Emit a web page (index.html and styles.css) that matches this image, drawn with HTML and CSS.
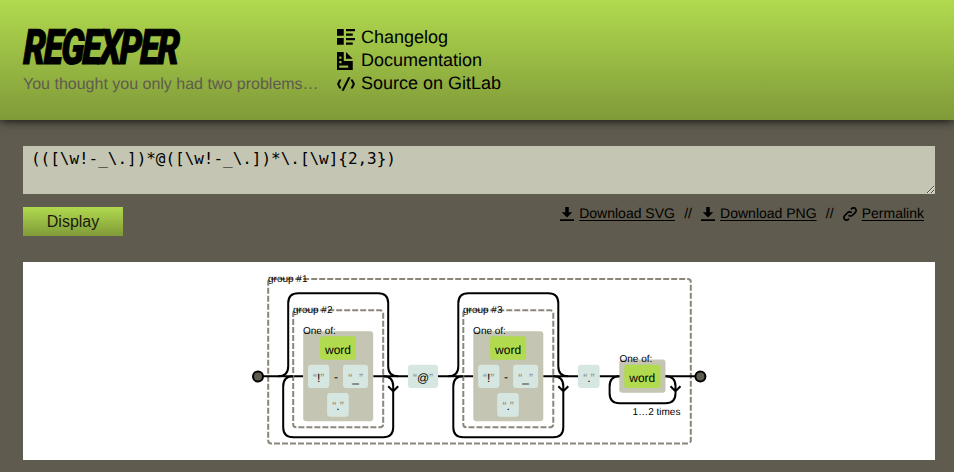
FILE: index.html
```html
<!DOCTYPE html>
<html lang="en">
<head>
<meta charset="utf-8">
<title>Regexper</title>
<link rel="stylesheet" href="styles.css">
</head>
<body>
<header class="header">
  <div class="brand">
    <h1 class="logo"><svg width="160" height="42" viewBox="0 0 160 42"><text class="logo-text" transform="translate(0 39) skewX(-2) scale(0.72 1)" x="0" y="0" textLength="217" lengthAdjust="spacing">REGEXPER</text></svg></h1>
    <div class="tagline">You thought you only had two problems…</div>
  </div>
  <nav class="nav">
    <a class="nav-link"><svg class="nav-icon" viewBox="0 0 8 8"><path d="M0 0v3h3v-3h-3zm4 0v1h4v-1h-4zm0 2v1h3v-1h-3zm-4 2v3h3v-3h-3zm4 0v1h4v-1h-4zm0 2v1h3v-1h-3z"/></svg>Changelog</a>
    <a class="nav-link"><svg class="nav-icon" viewBox="0 0 8 8"><path d="M0 0v8h7v-4h-4v-4h-3zm4 0v3h3l-3-3zm-3 2h1v1h-1v-1zm0 2h1v1h-1v-1zm0 2h4v1h-4v-1z"/></svg>Documentation</a>
    <a class="nav-link"><svg class="nav-icon" viewBox="0 0 8 8"><path d="M5 1l-3 6h1l3-6h-1zm-4 1l-1 2 1 2h1l-1-2 1-2h-1zm5 0l1 2-1 2h1l1-2-1-2h-1z"/></svg>Source on GitLab</a>
  </nav>
</header>
<main class="main">
  <textarea class="input" spellcheck="false">(([\w!-_\.])*@([\w!-_\.])*\.[\w]{2,3})</textarea>
  <div class="toolbar">
    <button class="display">Display</button>
    <div class="links">
      <svg class="link-icon" viewBox="0 0 8 8"><path d="M3 0v3h-2l3 3 3-3h-2v-3h-2zm-3 7v1h8v-1h-8z"/></svg><a class="link">Download SVG</a><span class="sep">//</span>
      <svg class="link-icon" viewBox="0 0 8 8"><path d="M3 0v3h-2l3 3 3-3h-2v-3h-2zm-3 7v1h8v-1h-8z"/></svg><a class="link">Download PNG</a><span class="sep">//</span>
      <svg class="link-icon" viewBox="0 0 8 8"><path d="M5.88.03c-.18.01-.36.03-.53.09-.27.1-.53.25-.75.47a.5.5 0 1 0 .69.69c.11-.11.24-.17.38-.22.35-.12.78-.07 1.06.22.39.39.39 1.04 0 1.44l-1.5 1.5c-.44.44-.8.48-1.06.47-.26-.01-.41-.13-.41-.13a.5.5 0 1 0-.5.88s.34.22.84.25c.5.03 1.2-.16 1.81-.78l1.5-1.5c.78-.78.78-2.04 0-2.81-.28-.28-.61-.45-.97-.53-.18-.04-.38-.04-.56-.03zm-2 2.31c-.5-.02-1.19.15-1.78.75l-1.5 1.5c-.78.78-.78 2.04 0 2.81.56.56 1.36.72 2.06.47.27-.1.53-.25.75-.47a.5.5 0 1 0-.69-.69c-.11.11-.24.17-.38.22-.35.12-.78.07-1.06-.22-.39-.39-.39-1.04 0-1.44l1.5-1.5c.4-.4.75-.45 1.03-.44.28.01.47.09.47.09a.5.5 0 1 0 .44-.88s-.34-.2-.84-.22z"/></svg><a class="link">Permalink</a>
    </div>
  </div>
  <div class="results">
    <svg class="diagram" width="912" height="198" viewBox="23 262 912 198">
      <defs>
        <g id="repeated-group">
          <rect class="group-box" x="293.2" y="310.3" width="90" height="117" rx="3"/>
          <rect class="charset" x="303.2" y="331.3" width="70" height="90" rx="3"/>
          <path class="track" d="M278.2 376.3q10 0 10-10V303.3q0-10 10-10H378.2q10 0 10 10V366.3q0 10 10 10M293.2 376.3q-10 0-10 10V427.3q0 10 10 10H383.2q10 0 10-10V386.3q0-10-10-10M388.2 386.3l5 5 5-5"/>
          <text class="small" x="303" y="334">One of:</text>
          <rect class="escape" x="320" y="336.3" width="36" height="23.4" rx="3"/>
          <text class="label" x="338" y="353.8">word</text>
          <rect class="literal" x="308" y="364.7" width="21.3" height="23.2" rx="3"/>
          <text class="label" x="318.6" y="381.8"><tspan class="quote">“</tspan>!<tspan class="quote">”</tspan></text>
          <text class="label" x="336" y="381">-</text>
          <rect class="literal" x="343" y="364.7" width="25" height="23.2" rx="3"/>
          <text class="label" x="355.6" y="381.8"><tspan class="quote">“</tspan>_<tspan class="quote">”</tspan></text>
          <rect class="literal" x="327.1" y="393.1" width="21.6" height="23.6" rx="3"/>
          <text class="label" x="338" y="410.2"><tspan class="quote">“</tspan>.<tspan class="quote">”</tspan></text>
        </g>
      </defs>
      <rect class="group-box" x="268.2" y="279" width="422.6" height="164.4" rx="3"/>
      <path class="track" d="M258 376.3H303.2M373.2 376.3H408M438 376.3H473.2M543.2 376.3H578M599.6 376.3H619.3M665.3 376.3H700.3"/>
      <use href="#repeated-group"/>
      <use href="#repeated-group" x="170.1"/>
      <text class="small" x="268" y="282.2">group #1</text>
      <text class="small" x="293" y="313.2">group #2</text>
      <text class="small" x="463" y="313.2">group #3</text>
      <rect class="literal" x="408" y="364.7" width="30" height="23.2" rx="3"/>
      <text class="label" x="423" y="381.8"><tspan class="quote">“</tspan>@<tspan class="quote">”</tspan></text>
      <rect class="literal" x="578" y="364.7" width="21.6" height="23.2" rx="3"/>
      <text class="label" x="588.8" y="381.8"><tspan class="quote">“</tspan>.<tspan class="quote">”</tspan></text>
      <rect class="charset" x="619.3" y="359.4" width="46.2" height="33.4" rx="3"/>
      <path class="track" d="M619.6 376.3q-10 0-10 10V393.2q0 10 10 10H665.5q10 0 10-10V386.3q0-10-10-10M670.5 386.3l5 5 5-5"/>
      <text class="small" x="619.5" y="362">One of:</text>
      <rect class="escape" x="624.3" y="364.7" width="36.2" height="23.2" rx="3"/>
      <text class="label" x="642.3" y="381.8">word</text>
      <text class="small" x="632.6" y="415.2">1…2 times</text>
      <circle class="terminal" cx="258" cy="376.5" r="5"/>
      <circle class="terminal" cx="700.4" cy="376.5" r="5"/>
    </svg>
  </div>
</main>
</body>
</html>
```
FILE: styles.css
```css
* { box-sizing: border-box; }
body {
  margin: 0;
  height: 472px;
  overflow: hidden;
  background: #5f5b4e;
  color: #000;
  font-family: "Liberation Sans", Helvetica, Arial, sans-serif;
  font-size: 16px;
  text-rendering: geometricPrecision;
}
.header {
  display: flex;
  height: 120px;
  padding: 25px 23px 0;
  background: linear-gradient(#b1da4e, #809a39);
  box-shadow: 0 0 10px #000;
}
.brand { width: 314px; }
.logo { margin: 0; height: 50px; line-height: 0; }
.logo svg { overflow: visible; }
.logo-text {
  font-family: Roboto, sans-serif;
  font-size: 49px;
  font-style: italic;
  font-weight: 900;
  stroke: #000;
  stroke-width: 1px;
}
.tagline { line-height: 19px; color: #5f5b4e; white-space: nowrap; }
.nav { display: flex; flex-direction: column; padding-top: 1px; }
.nav-link {
  display: flex;
  align-items: center;
  gap: 6px;
  height: 23px;
  font-size: 18px;
  line-height: 23px;
}
.nav-icon { width: 18px; height: 18px; margin-top: 1px; }
.main { padding: 26px 19px 0 23px; }
.input {
  display: block;
  width: 100%;
  height: 48px;
  margin: 0;
  padding: 3px 8px;
  border: 0;
  border-radius: 0;
  outline: 0;
  background: #c4c5b2;
  color: #000;
  font: 16px/19px "DejaVu Sans Mono", monospace;
  letter-spacing: -0.03px;
  resize: vertical;
  overflow: hidden;
}
.toolbar {
  display: flex;
  justify-content: space-between;
  height: 68px;
  padding: 13px 11px 0 0;
}
.display {
  width: 100px;
  height: 29px;
  padding: 0;
  border: 0;
  background: linear-gradient(#b1da4e, #809a39);
  color: #1a1b10;
  font: 16px "Liberation Sans", Helvetica, Arial, sans-serif;
}
.links { display: flex; height: 14px; align-items: center; font-size: 14px; line-height: 14px; }
.link-icon { width: 14px; height: 14px; margin-right: 5px; }
.link { text-decoration: underline; text-underline-offset: 2px; position: relative; top: -1px; }
.sep { margin: 0 9.2px; position: relative; top: -1px; }
.results { height: 198px; background: #fff; }
.diagram { display: block; }
.track { fill: none; stroke: #000; stroke-width: 2px; }
.group-box { fill: none; stroke: #8b867a; stroke-width: 2px; stroke-dasharray: 6 2; }
.charset { fill: #c4c5b2; }
.escape { fill: #b1da4e; }
.literal { fill: #d6e7e1; }
.label { font-size: 12px; text-anchor: middle; }
.quote { fill: #8b867a; }
.small { font-size: 10px; }
.terminal { fill: #5f5b4e; stroke: #000; stroke-width: 2px; }
```
